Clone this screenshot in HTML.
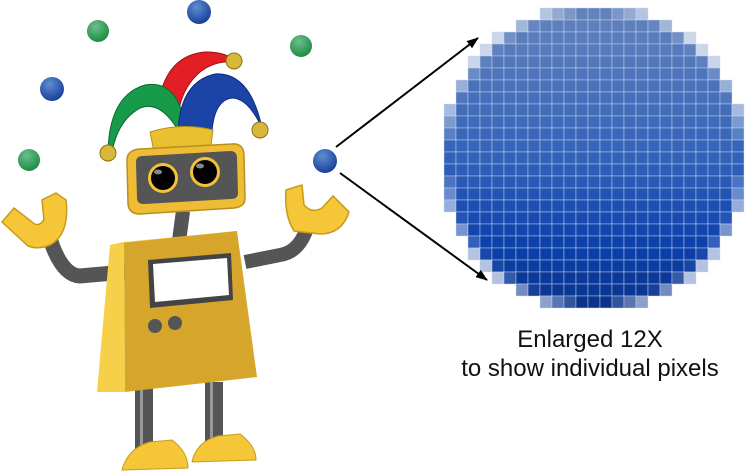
<!DOCTYPE html>
<html><head><meta charset="utf-8"><style>
html,body{margin:0;padding:0;background:#fff;width:750px;height:475px;overflow:hidden}
svg{position:absolute;left:0;top:0}
.t{position:absolute;left:420px;width:340px;text-align:center;font-family:"Liberation Sans",Arial,sans-serif;font-size:24px;color:#111;line-height:29px}
</style></head><body>
<svg id="s" width="750" height="475" viewBox="0 0 750 475">
<defs>
<radialGradient id="gb" cx="40%" cy="30%" r="70%"><stop offset="0" stop-color="#5f8fd0"/><stop offset="1" stop-color="#1a3f9a"/></radialGradient>
<radialGradient id="gg" cx="40%" cy="30%" r="70%"><stop offset="0" stop-color="#6cc08a"/><stop offset="1" stop-color="#1f8a45"/></radialGradient>
<linearGradient id="big" x1="0" y1="0" x2="0.2" y2="1"><stop offset="0" stop-color="#5a82c2"/><stop offset="0.5" stop-color="#2e62c0"/><stop offset="0.8" stop-color="#0a3fae"/><stop offset="1" stop-color="#083594"/></linearGradient>
<marker id="ar" markerWidth="12" markerHeight="9" refX="11" refY="4.5" orient="auto" markerUnits="userSpaceOnUse" viewBox="0 0 12 9"><path d="M0 0L12 4.5L0 9z" fill="#000"/></marker>
</defs>
<g id="pix"><circle id="fb" cx="594" cy="158" r="148" fill="url(#big)"/></g>
<line x1="336" y1="147" x2="478" y2="38" stroke="#000" stroke-width="2" marker-end="url(#ar)"/>
<line x1="340" y1="173" x2="487" y2="280" stroke="#000" stroke-width="2" marker-end="url(#ar)"/>
<circle cx="98" cy="31" r="11" fill="url(#gg)"/>
<circle cx="199" cy="12" r="12" fill="url(#gb)"/>
<circle cx="301" cy="46" r="11" fill="url(#gg)"/>
<circle cx="52" cy="89" r="12" fill="url(#gb)"/>
<circle cx="29" cy="160" r="11" fill="url(#gg)"/>
<circle cx="325" cy="161" r="12" fill="url(#gb)"/>
<path d="M48 232 Q60 275 80 276 L125 272" stroke="#555" stroke-width="15" fill="none"/>
<path d="M308 225 Q300 252 280 255 L245 262" stroke="#555" stroke-width="14" fill="none"/>
<path d="M2 222 L14 208 L32 222 Q38 228 44 220 L42 200 L56 193 L66 200 Q70 234 50 245 Q38 250 28 246 Z" fill="#f5c638" stroke="#c89a1a" stroke-width="1.5"/>
<path d="M286 190 L302 185 L304 205 Q312 214 322 208 L333 196 L349 212 Q342 234 320 234 L294 231 Q284 215 286 190 Z" fill="#f5c638" stroke="#c89a1a" stroke-width="1.5"/>
<rect x="135" y="388" width="18" height="70" fill="#555"/>
<rect x="205" y="382" width="18" height="68" fill="#555"/>
<rect x="140" y="388" width="3" height="70" fill="#999"/>
<rect x="210" y="382" width="3" height="68" fill="#999"/>
<path d="M122 470 Q128 448 150 442 L172 440 Q188 452 188 468 Z" fill="#f5c638" stroke="#c89a1a"/>
<path d="M192 462 Q196 442 218 436 L240 434 Q256 446 256 460 Z" fill="#f5c638" stroke="#c89a1a"/>
<path d="M172 240 L176 210 L190 212 L186 242 Z" fill="#555"/>
<path d="M97 392 L110 245 L124 243 L125 392 Z" fill="#f7d04a"/>
<path d="M110 245 L124 242 L237 231 L226 236 Z" fill="#f3c63a"/>
<path d="M124 243 L237 231 L257 377 L125 392 Z" fill="#d6a62c"/>
<path d="M148 260 L231 253 L233 300 L150 308 Z" fill="#444"/>
<path d="M153 264 L227 258 L229 295 L155 302 Z" fill="#fff"/>
<circle cx="155" cy="326" r="7" fill="#555"/>
<circle cx="175" cy="323" r="7" fill="#555"/>
<path d="M160 95 Q170 55 205 52 Q228 52 236 62 Q215 60 200 72 Q185 85 180 105 Z" fill="#e31e24" stroke="#a01015"/>
<path d="M108 150 Q110 95 145 85 Q172 80 182 112 L178 130 Q160 100 140 108 Q118 120 112 152 Z" fill="#179a4a" stroke="#0c6a30"/>
<path d="M178 132 Q180 82 215 74 Q250 72 262 128 Q248 98 232 98 Q215 100 212 130 Z" fill="#1a44a8" stroke="#0d2a78"/>
<path d="M150 132 Q182 122 213 130 L210 152 Q180 144 154 152 Z" fill="#e8c030" stroke="#b8901a"/>
<circle cx="234" cy="61" r="8" fill="#d8b83a" stroke="#8a6e10"/>
<circle cx="108" cy="153" r="8" fill="#d8b83a" stroke="#8a6e10"/>
<circle cx="260" cy="130" r="8" fill="#d8b83a" stroke="#8a6e10"/>
<path d="M127 160 Q127 150 140 149 L232 144 Q244 143 244 156 L245 198 Q245 207 234 208 L140 214 Q129 214 128 204 Z" fill="#eebd35" stroke="#b98e1c" stroke-width="1.5"/>
<path d="M136 162 Q136 156 143 156 L230 151 Q237 151 237 158 L238 193 Q238 199 231 199 L144 204 Q137 204 137 198 Z" fill="#555"/>
<circle cx="163" cy="178" r="15" fill="#f3c238"/>
<circle cx="163" cy="178" r="12" fill="#000"/>
<circle cx="205" cy="172" r="15" fill="#f3c238"/>
<circle cx="205" cy="172" r="12" fill="#000"/>
<ellipse cx="158" cy="172" rx="4" ry="2.5" fill="#888"/>
<ellipse cx="200" cy="166" rx="4" ry="2.5" fill="#888"/>
</svg>
<div class="t" style="top:325px">Enlarged 12X</div>
<div class="t" style="top:354px">to show individual pixels</div>
<script>
(function(){
var g=document.getElementById('pix'),s='';
var cx=594,cy=158,R=150;
function lerp(a,b,t){return a+(b-a)*t}
var top=[98,130,188],mid=[50,98,185],low=[12,64,172],bot=[10,52,140];
for(var j=0;j<25;j++)for(var i=0;i<25;i++){
 var x0=444+i*12,y0=8+j*12,c=0;
 for(var a=0;a<4;a++)for(var b=0;b<4;b++){var dx=x0+1.5+a*3-cx,dy=y0+1.5+b*3-cy;if(dx*dx+dy*dy<=R*R)c++;}
 if(!c)continue;var cov=c/16;
 var t=j/24,col;
 if(t<0.5)col=top.map(function(v,k){return lerp(v,mid[k],t/0.5)});
 else if(t<0.8)col=mid.map(function(v,k){return lerp(v,low[k],(t-0.5)/0.3)});
 else col=low.map(function(v,k){return lerp(v,bot[k],(t-0.8)/0.2)});
 col=col.map(function(v){return Math.round(v+(255-v)*(1-cov)*0.85)});
 s+='<rect x="'+x0+'" y="'+y0+'" width="12" height="12" fill="rgb('+col.join(',')+')" stroke="rgba(210,220,240,0.45)" stroke-width="1"/>';
}
g.innerHTML=s;
})();
</script>
</body></html>
